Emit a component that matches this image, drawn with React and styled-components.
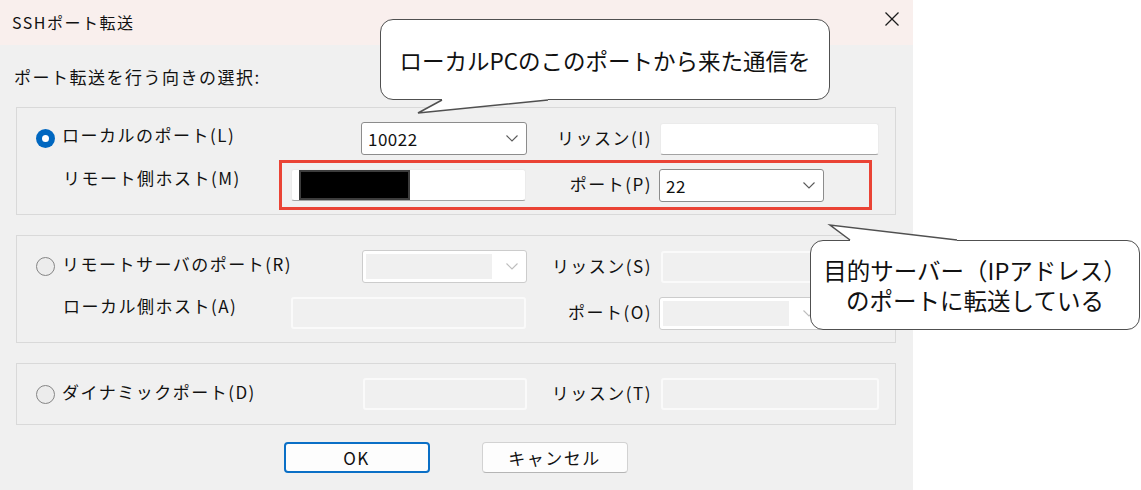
import React from "react";
import styled, { createGlobalStyle } from "styled-components";

const UI_FONT = `"Noto Sans CJK JP", "Noto Sans", sans-serif`;

const GlobalStyle = createGlobalStyle`
  html, body { margin: 0; padding: 0; background: #ffffff; }
  body { font-family: ${UI_FONT}; }
`;

const Page = styled.div`
  position: relative;
  width: 1141px;
  height: 490px;
  overflow: hidden;
`;

const Dialog = styled.div`
  width: 913px;
  height: 490px;
  background: #f0f0f0;
  display: flex;
  flex-direction: column;
  font-family: ${UI_FONT};
  color: #111;
`;

const TitleBar = styled.div`
  height: 45px;
  flex: none;
  box-sizing: border-box;
  background: #f9efed;
  display: flex;
  align-items: center;
  justify-content: space-between;
  padding: 0 14px 2px 12px;
`;

const Title = styled.div`
  font-size: 16px;
  letter-spacing: 1.5px;
  line-height: 20px;
`;

const CloseIcon = styled.svg`
  width: 14px;
  height: 14px;
  stroke: #1c1c1c;
  stroke-width: 1.3;
  margin-top: -6px;
`;

const Body = styled.div`
  display: flex;
  flex-direction: column;
  padding: 20px 17px 0 16px;
`;

const Caption = styled.div`
  font-size: 17px;
  letter-spacing: 1.5px;
  line-height: 24px;
  margin-left: -2px;
  margin-bottom: 18px;
`;

const Groups = styled.div`
  display: flex;
  flex-direction: column;
  gap: 20px;
`;

const Group = styled.div`
  border: 1px solid #d9d9d9;
  padding: 14px 16px 14px 0;
  display: flex;
  flex-direction: column;
  gap: 14px;
`;

const Row = styled.div`
  display: grid;
  grid-template-columns: 274px 236px 132px 220px;
  height: 32px;
  align-items: center;
`;

const Text = styled.span`
  font-size: 17px;
  letter-spacing: 1.5px;
  line-height: 20px;
  white-space: nowrap;
`;

const RadioLabel = styled.label`
  display: flex;
  align-items: center;
  gap: 7px;
  padding-left: 19px;
`;

const RadioText = styled(Text)`
  margin-bottom: ${(p) => p.$lift * 2}px;
`;

const Radio = styled.span`
  position: relative;
  width: 19px;
  height: 19px;
  box-sizing: border-box;
  border-radius: 50%;
  flex: none;
  background: ${(p) => (p.$checked ? "#0067c0" : "#ececec")};
  border: ${(p) => (p.$checked ? "none" : "1.5px solid #858585")};
  &::after {
    content: "";
    display: ${(p) => (p.$checked ? "block" : "none")};
    position: absolute;
    left: 6px;
    top: 6px;
    width: 7px;
    height: 7px;
    border-radius: 50%;
    background: #fff;
  }
`;

const SubLabel = styled(Text)`
  padding-left: 46px;
  margin-bottom: 14px;
`;

const FieldLabel = styled(Text)`
  text-align: right;
  padding-right: 7px;
  margin-bottom: 2px;
`;

const Combo = styled.div`
  box-sizing: border-box;
  width: ${(p) => p.$width}px;
  height: 33px;
  justify-self: ${(p) => p.$justify || "start"};
  display: flex;
  align-items: center;
  background: #ffffff;
  border: 1px solid ${(p) => (p.$disabled ? "#cccccc" : "#8c8c8c")};
  border-radius: 3px;
`;

const ComboValue = styled.div`
  flex: 1;
  align-self: stretch;
  display: flex;
  align-items: center;
  margin: ${(p) => (p.$disabled ? "3px 0 3px 3px" : "0")};
  padding-left: 6px;
  background: ${(p) => (p.$disabled ? "#f0f0f0" : "transparent")};
  font-size: 17px;
  letter-spacing: 0.5px;
`;

const Chevron = styled.svg`
  width: 12px;
  height: 7px;
  flex: none;
  margin: 0 8px 0 14px;
  fill: none;
  stroke: ${(p) => (p.$disabled ? "#bdbdbd" : "#5a5a5a")};
  stroke-width: 1.1;
`;

const TextBox = styled.div`
  box-sizing: border-box;
  width: ${(p) => p.$width}px;
  height: 32px;
  justify-self: ${(p) => p.$justify || "start"};
  display: flex;
  align-items: center;
  padding-left: 7px;
  border-radius: 3px;
  background: ${(p) => (p.$disabled ? "#f0f0f0" : "#ffffff")};
  border: ${(p) => (p.$disabled ? "2px solid #fafafa" : "1px solid #ebebeb")};
  border-bottom-color: ${(p) => (p.$disabled ? "#fafafa" : "#a3a3a3")};
`;

const Redacted = styled.div`
  width: 111px;
  height: 30px;
  box-sizing: border-box;
  background: #000;
  border: 2px solid #3c3c3c;
`;

const ButtonRow = styled.div`
  display: flex;
  justify-content: center;
  gap: 52px;
  margin-top: 17px;
  padding-right: 1px;
`;

const Button = styled.button`
  width: 146px;
  height: 31px;
  box-sizing: border-box;
  border-radius: 4px;
  background: #fdfdfd;
  font-family: ${UI_FONT};
  font-size: 17px;
  letter-spacing: 1.5px;
  color: #111;
  padding: 0;
  border: ${(p) => (p.$primary ? "2px solid #0a6fc6" : "1px solid #d2d2d2")};
  border-bottom-color: ${(p) => (p.$primary ? "#0a6fc6" : "#b5b5b5")};
`;

const Highlight = styled.div`
  position: absolute;
  left: 279px;
  top: 160px;
  width: 593px;
  height: 50px;
  box-sizing: border-box;
  border: 3px solid #ea4335;
  pointer-events: none;
`;

const Callout = styled.div`
  position: absolute;
  left: ${(p) => p.$x}px;
  top: ${(p) => p.$y}px;
  width: ${(p) => p.$w}px;
  height: ${(p) => p.$h}px;
  box-sizing: border-box;
  background: #ffffff;
  border: 1.5px solid #505050;
  border-radius: 13px;
  display: flex;
  align-items: center;
  justify-content: center;
  text-align: center;
  font-family: ${UI_FONT};
  font-size: ${(p) => p.$size}px;
  line-height: 30px;
  color: #111;
  white-space: pre;
`;

const Tail = styled.svg`
  position: absolute;
  left: -1.5px;
  top: -1.5px;
  width: 1px;
  height: 1px;
  overflow: visible;
`;

function CalloutTail({ base1, tip, base2, dir }) {
  const d = dir === "down" ? -3 : 3;
  const fill = `${base1[0]},${base1[1] + d} ${base1[0]},${base1[1]} ${tip[0]},${tip[1]} ${base2[0]},${base2[1]} ${base2[0]},${base2[1] + d}`;
  const line = `${base1[0]},${base1[1]} ${tip[0]},${tip[1]} ${base2[0]},${base2[1]}`;
  return (
    <Tail>
      <polygon points={fill} fill="#ffffff" stroke="none" />
      <polyline points={line} fill="none" stroke="#505050" strokeWidth="1.5" strokeLinejoin="miter" />
    </Tail>
  );
}

function ComboBox({ value, width, justify, disabled }) {
  return (
    <Combo $width={width} $justify={justify} $disabled={disabled}>
      <ComboValue $disabled={disabled}>{value}</ComboValue>
      <Chevron viewBox="0 0 12 7" $disabled={disabled}>
        <polyline points="0.5,0.5 6,6 11.5,0.5" />
      </Chevron>
    </Combo>
  );
}

function RadioOption({ checked, lift = 4, children }) {
  return (
    <RadioLabel>
      <Radio $checked={checked} />
      <RadioText $lift={lift}>{children}</RadioText>
    </RadioLabel>
  );
}

export default function App() {
  return (
    <Page>
      <GlobalStyle />
      <Dialog>
        <TitleBar>
          <Title>SSHポート転送</Title>
          <CloseIcon viewBox="0 0 14 14">
            <line x1="0.5" y1="0.5" x2="13.5" y2="13.5" />
            <line x1="13.5" y1="0.5" x2="0.5" y2="13.5" />
          </CloseIcon>
        </TitleBar>
        <Body>
          <Caption>ポート転送を行う向きの選択:</Caption>
          <Groups>
            <Group>
              <Row>
                <RadioOption checked lift={4}>ローカルのポート(L)</RadioOption>
                <ComboBox value="10022" width={166} justify="end" />
                <FieldLabel>リッスン(I)</FieldLabel>
                <TextBox $width={219} $justify="end" />
              </Row>
              <Row>
                <SubLabel>リモート側ホスト(M)</SubLabel>
                <TextBox $width={235}>
                  <Redacted />
                </TextBox>
                <FieldLabel>ポート(P)</FieldLabel>
                <ComboBox value="22" width={165} />
              </Row>
            </Group>
            <Group>
              <Row>
                <RadioOption lift={3}>リモートサーバのポート(R)</RadioOption>
                <ComboBox value="" width={165} justify="end" disabled />
                <FieldLabel>リッスン(S)</FieldLabel>
                <TextBox $width={218} $justify="end" $disabled />
              </Row>
              <Row>
                <SubLabel>ローカル側ホスト(A)</SubLabel>
                <TextBox $width={235} $disabled />
                <FieldLabel>ポート(O)</FieldLabel>
                <ComboBox value="" width={165} disabled />
              </Row>
            </Group>
            <Group>
              <Row>
                <RadioOption lift={2}>ダイナミックポート(D)</RadioOption>
                <TextBox $width={164} $justify="end" $disabled />
                <FieldLabel>リッスン(T)</FieldLabel>
                <TextBox $width={218} $justify="end" $disabled />
              </Row>
            </Group>
          </Groups>
          <ButtonRow>
            <Button $primary>OK</Button>
            <Button>キャンセル</Button>
          </ButtonRow>
        </Body>
      </Dialog>

      <Highlight />

      <Callout $x={380} $y={19} $w={450} $h={81} $size={22.5}>
        ローカルPCのこのポートから来た通信を
        <CalloutTail base1={[62, 81]} tip={[38, 94]} base2={[168, 81]} dir="down" />
      </Callout>

      <Callout $x={810} $y={240} $w={330} $h={90} $size={23.5}>
        {"目的サーバー（IPアドレス）\nのポートに転送している"}
        <CalloutTail base1={[40, 0]} tip={[20, -15]} base2={[147, 0]} dir="up" />
      </Callout>
    </Page>
  );
}
